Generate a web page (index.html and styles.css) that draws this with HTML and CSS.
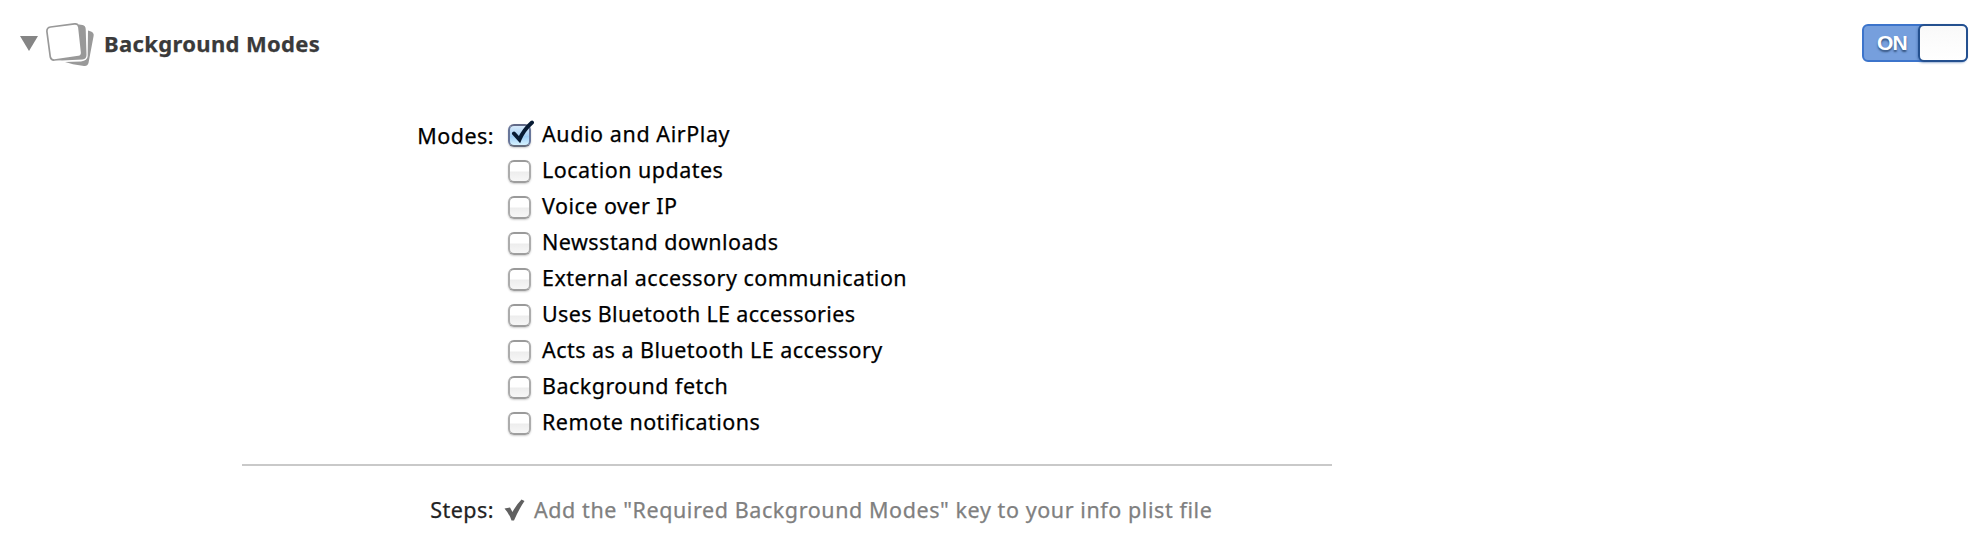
FILE: index.html
```
<!DOCTYPE html>
<html lang="en">
<head>
<meta charset="utf-8">
<title>Background Modes</title>
<link rel="stylesheet" href="styles.css">
</head>
<body>
<header class="header">
  <svg class="disclosure" width="18" height="15" viewBox="0 0 18 15"><path d="M0 0H18L9 15Z" fill="#858585"/></svg>
  <svg class="pages" width="52" height="46" viewBox="44 21 52 46">
    <path d="M88 30.500L91 31.500Q94.300 33 93.600 36L88.500 63Q87.500 66.500 84 66L73 64.200L65 62L81 61.500Q87.500 60.500 87.700 56Z" fill="#999"/>
    <path d="M79 24.500L82.500 25Q85.500 25.500 85.700 29L86.500 55Q86.500 59 82.500 59.500L62 60.500L55 60L80 56Z" fill="#999"/>
    <path d="M50.500 27L74.500 23.900Q78.300 23.500 78.900 27L81.700 52.500Q82 56.200 78.500 56.700L54.500 60Q51 60.300 50.300 57L46.900 31.500Q46.700 27.500 50.500 27Z" fill="#fff" stroke="#999" stroke-width="1.700"/>
  </svg>
  <h1 class="title">Background Modes</h1>
  <div class="switch"><span class="switch-text">ON</span><span class="knob"></span></div>
</header>
<main class="content">
  <section class="modes">
    <div class="label">Modes:</div>
    <div class="options">
      <div class="option"><span class="box checked"><svg class="tick" width="24" height="24" viewBox="0 0 24 24"><path d="M4 13.500L9.500 19.500Q13.500 10 22 2.500" fill="none" stroke="#071a33" stroke-width="4" stroke-linecap="round"/></svg></span><span class="wide">Audio and AirPlay</span></div>
      <div class="option"><span class="box"></span><span>Location updates</span></div>
      <div class="option"><span class="box"></span><span>Voice over IP</span></div>
      <div class="option"><span class="box"></span><span>Newsstand downloads</span></div>
      <div class="option"><span class="box"></span><span>External accessory communication</span></div>
      <div class="option"><span class="box"></span><span class="tight">Uses Bluetooth LE accessories</span></div>
      <div class="option"><span class="box"></span><span>Acts as a Bluetooth LE accessory</span></div>
      <div class="option"><span class="box"></span><span>Background fetch</span></div>
      <div class="option"><span class="box"></span><span>Remote notifications</span></div>
    </div>
  </section>
  <div class="rule"></div>
  <section class="steps">
    <div class="label steps-label">Steps:</div>
    <svg class="done" width="21" height="22" viewBox="0 0 21 22"><path d="M0.500 9.500L6 8.500L8.500 13Q12 6 17.500 0.500L20.500 2Q15 10 10 21.500H7.500Q5.500 15 0.500 9.500Z" fill="#606060"/></svg>
    <div class="step-text wide">Add the "Required Background Modes" key to your info plist file</div>
  </section>
</main>
</body>
</html>
```
FILE: styles.css
```
* { box-sizing: border-box; }
body {
  margin: 0;
  height: 550px;
  background: #fff;
  color: #000;
  font-family: "Noto Sans", "Open Sans", sans-serif;
  font-size: 21.5px;
  line-height: 36px;
  letter-spacing: 0.47px;
  -webkit-text-stroke: 0.25px currentColor;
  white-space: nowrap;
  overflow: hidden;
}
.header {
  display: flex;
  align-items: center;
  height: 86px;
  padding: 0 10px 0 20px;
}
.disclosure { flex: none; }
.pages { flex: none; margin: 2px 0 0 6px; }
.title {
  margin: 0 0 0 8px;
  font-size: 22px;
  line-height: 36px;
  font-weight: 700;
  letter-spacing: 0.35px;
  color: #3a3a3a;
}
.switch {
  display: flex;
  align-items: center;
  width: 106px;
  height: 38px;
  margin-left: auto;
  padding-left: 13px;
  background: #769fdd;
  border: 2px solid #3c74cb;
  border-radius: 6px;
}
.switch-text {
  color: #fff;
  font: bold 21px/36px "Liberation Sans", Arial, sans-serif;
  letter-spacing: -0.8px;
  text-shadow: 0 2px 2px #36547f;
  -webkit-text-stroke: 0;
}
.knob {
  width: 50px;
  height: 38px;
  margin: 0 -2px 0 auto;
  border: 2px solid #24508f;
  border-radius: 6px;
  background: linear-gradient(#f9f9f9, #fff);
  box-shadow: -1px 1px 2px #3c67a980;
}
.modes {
  display: flex;
  padding-top: 30px;
  height: 378px;
}
.label { width: 494px; text-align: right; }
.modes .label { padding-top: 2px; }
.options { padding-left: 14px; }
.option {
  display: flex;
  align-items: center;
  gap: 11px;
  height: 36px;
}
.wide { letter-spacing: 0.58px; }
.tight { letter-spacing: 0.34px; }
.box {
  position: relative;
  flex: none;
  width: 23px;
  height: 23px;
  margin-top: 2px;
  border: 2px solid #9b9b9b;
  border-color: #9a9a9a #acacac #9e9e9e;
  border-radius: 6px;
  background: linear-gradient(#fff 0 48%, #ededed 52%, #f7f7f7);
  box-shadow: 0 1px 2px #0003;
}
.checked {
  border-color: #626a88 #68769a #656c7c;
  background: linear-gradient(#d7eafb 0, #a9d1f5 50%, #9bcbf5 52%, #d5f2ff);
}
.tick { position: absolute; left: 0; top: -6px; }
.rule {
  width: 1090px;
  height: 2px;
  margin-left: 242px;
  background: #c9c9c9;
}
.steps { display: flex; align-items: center; padding-top: 26px; }
.steps-label { color: #222; }
.done { flex: none; margin-left: 10px; }
.step-text { margin-left: 9px; color: #808080; }
```
